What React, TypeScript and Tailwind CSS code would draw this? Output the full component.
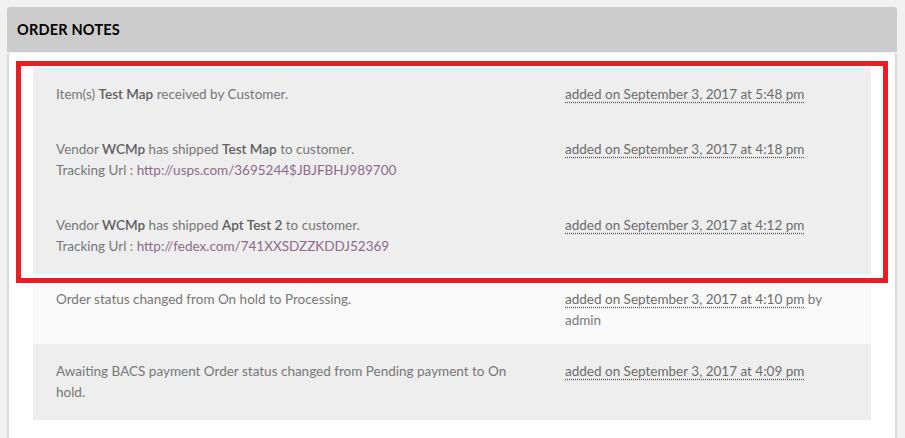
import React from 'react';

type Note = {
  body: React.ReactNode;
  date: string;
  by?: string;
  tone: 'dark' | 'light';
  pad?: string;
};

const B: React.FC<{ children: React.ReactNode }> = ({ children }) => (
  <span className="font-semibold text-[#5f5f5f]">{children}</span>
);

const Track: React.FC<{ url: string }> = ({ url }) => (
  <>
    <br />
    Tracking Url : <span className="text-[#8f6a8c]">{url}</span>
  </>
);

const notes: Note[] = [
  {
    body: (
      <>
        Item(s) <B>Test Map</B> received by Customer.
      </>
    ),
    date: 'added on September 3, 2017 at 5:48 pm',
    tone: 'dark',
  },
  {
    body: (
      <>
        Vendor <B>WCMp</B> has shipped <B>Test Map</B> to customer.
        <Track url="http://usps.com/3695244$JBJFBHJ989700" />
      </>
    ),
    date: 'added on September 3, 2017 at 4:18 pm',
    tone: 'dark',
  },
  {
    body: (
      <>
        Vendor <B>WCMp</B> has shipped <B>Apt Test 2</B> to customer.
        <Track url="http://fedex.com/741XXSDZZKDDJ52369" />
      </>
    ),
    date: 'added on September 3, 2017 at 4:12 pm',
    tone: 'dark',
  },
  {
    body: <>Order status changed from On hold to Processing.</>,
    date: 'added on September 3, 2017 at 4:10 pm',
    by: 'admin',
    tone: 'light',
    pad: 'pt-[15px] pb-[13px]',
  },
  {
    body: <>Awaiting BACS payment Order status changed from Pending payment to On hold.</>,
    date: 'added on September 3, 2017 at 4:09 pm',
    tone: 'dark',
  },
];

const NoteRow: React.FC<{ note: Note }> = ({ note }) => (
  <li
    className={`flex ${note.pad ?? 'py-[17px]'} ${
      note.tone === 'dark' ? 'bg-[#eeeeee]' : 'bg-[#fafafa]'
    }`}
  >
    <div className="w-[532px] shrink-0 pl-[23px] pr-[42px]">{note.body}</div>
    <div className="w-[282px] shrink-0">
      <span className="text-[#6c6c6c] underline decoration-dotted decoration-[#555] underline-offset-[3px]">
        {note.date}
      </span>
      {note.by && <> by {note.by}</>}
    </div>
  </li>
);

export default function App() {
  return (
    <div
      className="relative min-h-screen bg-[#f1f1f1] pt-[7px] pl-[7px] pr-[8px] text-[13.5px] leading-[21px] text-[#777]"
      style={{ fontFamily: 'Lato, "Open Sans", sans-serif' }}
    >
      <div className="flex h-[45px] items-center rounded-t-[3px] bg-[#cccccc] pl-[10px]">
        <h2 className="text-[14.5px] font-bold tracking-[0.2px] text-black">ORDER NOTES</h2>
      </div>
      <div className="mt-px rounded-t-[3px] border-x-2 border-[#d9d9d9] bg-white px-[24px] pt-[14px] pb-[18px]">
        <ul>
          {notes.map((n, i) => (
            <NoteRow key={i} note={n} />
          ))}
        </ul>
      </div>

      {/* highlight annotation */}
      <div className="pointer-events-none absolute left-[16px] top-[61px] h-[222px] w-[872px] border-[5px] border-[#ed1c24]" />
    </div>
  );
}
